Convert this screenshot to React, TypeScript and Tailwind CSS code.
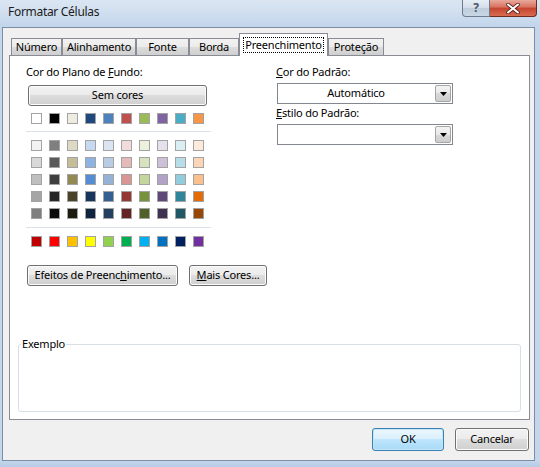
import React from 'react';

const themeRow = ['#ffffff', '#000000', '#eeece1', '#1f497d', '#4f81bd', '#c0504d', '#9bbb59', '#8064a2', '#4bacc6', '#f79646'];

const tintRows = [
  ['#f2f2f2', '#7f7f7f', '#ddd9c3', '#c6d9f0', '#dbe5f1', '#f2dcdb', '#ebf1dd', '#e5e0ec', '#dbeef3', '#fdeada'],
  ['#d8d8d8', '#595959', '#c4bd97', '#8db3e2', '#b8cce4', '#e5b9b7', '#d7e3bc', '#ccc1d9', '#b7dde8', '#fbd5b5'],
  ['#bfbfbf', '#3f3f3f', '#938953', '#548dd4', '#95b3d7', '#d99694', '#c3d69b', '#b2a2c7', '#92cddc', '#fac08f'],
  ['#a5a5a5', '#262626', '#494429', '#17365d', '#366092', '#953734', '#76923c', '#5f497a', '#31859b', '#e36c09'],
  ['#7f7f7f', '#0c0c0c', '#1d1b10', '#0f243e', '#244061', '#632423', '#4f6128', '#3f3151', '#205867', '#974806'],
];

const standardRow = ['#c00000', '#ff0000', '#ffc000', '#ffff00', '#92d050', '#00b050', '#00b0f0', '#0070c0', '#002060', '#7030a0'];

const tabs = [
  { label: 'Número', w: 'w-[51px]' },
  { label: 'Alinhamento', w: 'w-[74px]' },
  { label: 'Fonte', w: 'w-[53px]' },
  { label: 'Borda', w: 'w-[50px]' },
  { label: 'Preenchimento', w: 'w-[89px]', active: true },
  { label: 'Proteção', w: 'w-[56px]' },
];

function Swatch({ color }: { color: string }) {
  return <div className="w-[11px] h-[11px] border border-[#a3a3a3]" style={{ backgroundColor: color }} />;
}

function SwatchRow({ colors }: { colors: string[] }) {
  return (
    <div className="flex gap-[7px] pl-[5px]">
      {colors.map((c, i) => (
        <Swatch key={i} color={c} />
      ))}
    </div>
  );
}

function Button({ children, className = '' }: { children: React.ReactNode; className?: string }) {
  return (
    <div
      className={`flex items-center justify-center whitespace-nowrap rounded-[3px] border border-[#707070] bg-[linear-gradient(#f2f2f2_0%,#ebebeb_50%,#dddddd_50%,#cfcfcf_100%)] shadow-[inset_0_0_0_1px_#fcfcfc] ${className}`}
    >
      {children}
    </div>
  );
}

function Dropdown({ value }: { value?: string }) {
  return (
    <div className="flex h-[21px] w-[176px] border border-[#828790] bg-white">
      <div className="flex-1 flex items-center justify-center">{value}</div>
      <div className="m-px w-[16px] flex items-center justify-center rounded-[2px] border border-[#a6a6a6] bg-[linear-gradient(#f3f3f3_0%,#e9e9e9_50%,#d9d9d9_50%,#cdcdcd_100%)]">
        <svg width="7" height="4" viewBox="0 0 7 4">
          <path d="M0 0h7L3.5 4z" fill="#000" />
        </svg>
      </div>
    </div>
  );
}

function TitleBar() {
  return (
    <div className="h-[27px] flex items-start justify-between bg-[linear-gradient(#dbe6f3_0%,#cfdeef_50%,#c2d5ec_100%)] pr-[3px]">
      <div className="pl-[8px] pt-[4px] leading-[16px] text-[12px] tracking-[-0.3px] text-[#1b1b1b]">Formatar Células</div>
      <div className="flex">
        <div className="w-[28px] h-[17px] flex items-center justify-center rounded-bl-[4px] border border-t-0 border-[#6d7b8d] bg-[linear-gradient(#e6edf5_0%,#d3dde9_50%,#bfccdc_50%,#c9d6e5_100%)]">
          <span className="text-[12px] leading-none text-[#4a5566] font-bold">?</span>
        </div>
        <div className="w-[47px] h-[17px] flex items-center justify-center rounded-br-[4px] border border-l-0 border-t-0 border-[#6f2a22] bg-[linear-gradient(#e9a99b_0%,#d7725f_45%,#c4432f_50%,#d86c50_100%)]">
          <svg width="14" height="11" viewBox="0 0 14 11">
            <path d="M2 1.5l10 8M12 1.5l-10 8" stroke="#5a1f18" strokeWidth="3.6" strokeLinecap="round" />
            <path d="M2 1.5l10 8M12 1.5l-10 8" stroke="#ffffff" strokeWidth="2" strokeLinecap="round" />
          </svg>
        </div>
      </div>
    </div>
  );
}

export default function App() {
  return (
    <div className="w-[540px] h-[467px] flex flex-col overflow-hidden bg-[#c2d5ec] font-['Noto_Sans',sans-serif] text-[11px] tracking-[-0.2px] text-black">
      <TitleBar />
      <div className="flex flex-1 min-h-0">
        <div className="w-[2px] bg-[#c4d6ec]" />
        <div className="flex-1 flex flex-col border border-[#7d8ea3] bg-[#f0f0f0] pl-[6px] pr-[4px] pt-[5px]">
          {/* tabs */}
          <div className="flex items-end h-[22px] pl-[2px]">
            {tabs.map((t) =>
              t.active ? (
                <div
                  key={t.label}
                  className={`${t.w} h-[23px] -mb-px relative z-10 flex items-start justify-center pt-[3px] border border-b-0 border-[#898c95] bg-white`}
                >
                  <span className="border border-dotted border-black px-px leading-[14px]">{t.label}</span>
                </div>
              ) : (
                <div
                  key={t.label}
                  className={`${t.w} h-[17px] flex items-center justify-center border border-b-0 border-[#898c95] bg-[linear-gradient(#f2f2f2_0%,#ebebeb_50%,#dddddd_50%,#cfcfcf_100%)] leading-[14px]`}
                >
                  {t.label}
                </div>
              )
            )}
          </div>

          {/* tab panel */}
          <div className="flex-1 flex flex-col border border-[#898c95] bg-white">
            <div className="flex pt-[8px] pl-[16px]">
              <div className="w-[185px] flex flex-col">
                <div className="leading-[16px]">
                  Cor do Plano de <span className="underline">F</span>undo:
                </div>
                <Button className="mt-[5px] ml-[2px] w-[179px] h-[21px] border-[#3c3c3c]">Sem cores</Button>
                <div className="mt-[7px]">
                  <SwatchRow colors={themeRow} />
                </div>
                <div className="mt-[7px] h-px bg-[#dde2e8]" />
                <div className="mt-[8px] flex flex-col gap-[6px]">
                  {tintRows.map((r, i) => (
                    <SwatchRow key={i} colors={r} />
                  ))}
                </div>
                <div className="mt-[8px] h-px bg-[#dde2e8]" />
                <div className="mt-[8px]">
                  <SwatchRow colors={standardRow} />
                </div>
                <div className="mt-[18px] ml-[1px] flex gap-[11px]">
                  <Button className="w-[151px] h-[21px] shrink-0">
                    <span>
                      Efeitos de Preenc<span className="underline">h</span>imento...
                    </span>
                  </Button>
                  <Button className="w-[78px] h-[21px] shrink-0">
                    <span>
                      <span className="underline">M</span>ais Cores...
                    </span>
                  </Button>
                </div>
              </div>

              <div className="ml-[65px] flex flex-col">
                <div className="leading-[16px]">
                  <span className="underline">C</span>or do Padrão:
                </div>
                <div className="mt-[3px] ml-px">
                  <Dropdown value="Automático" />
                </div>
                <div className="mt-[1px] leading-[16px]">
                  <span className="underline">E</span>stilo do Padrão:
                </div>
                <div className="mt-[3px] ml-px">
                  <Dropdown />
                </div>
              </div>
            </div>

            <div className="flex-1" />

            <fieldset className="mx-[8px] mb-[7px] h-[76px] rounded-[3px] border border-[#d5dfe5]">
              <legend className="ml-[2px] px-px leading-[16px]">Exemplo</legend>
            </fieldset>
          </div>

          {/* bottom buttons */}
          <div className="flex justify-end gap-[11px] mt-[8px] mb-[9px] pr-px">
            <div className="w-[72px] h-[23px] flex items-center justify-center rounded-[3px] border border-[#3c7fb1] bg-[linear-gradient(#eaf6fd_0%,#d9f0fc_50%,#bee6fd_50%,#a7d9f5_100%)] shadow-[inset_0_0_0_1px_#c4e5f6]">
              OK
            </div>
            <Button className="w-[74px] h-[23px]">Cancelar</Button>
          </div>
        </div>
        <div className="w-[5px] bg-[#c4d6ec]" />
      </div>
      <div className="h-[6px] bg-[linear-gradient(#c4d6ec,#b6cbe5)]" />
    </div>
  );
}
